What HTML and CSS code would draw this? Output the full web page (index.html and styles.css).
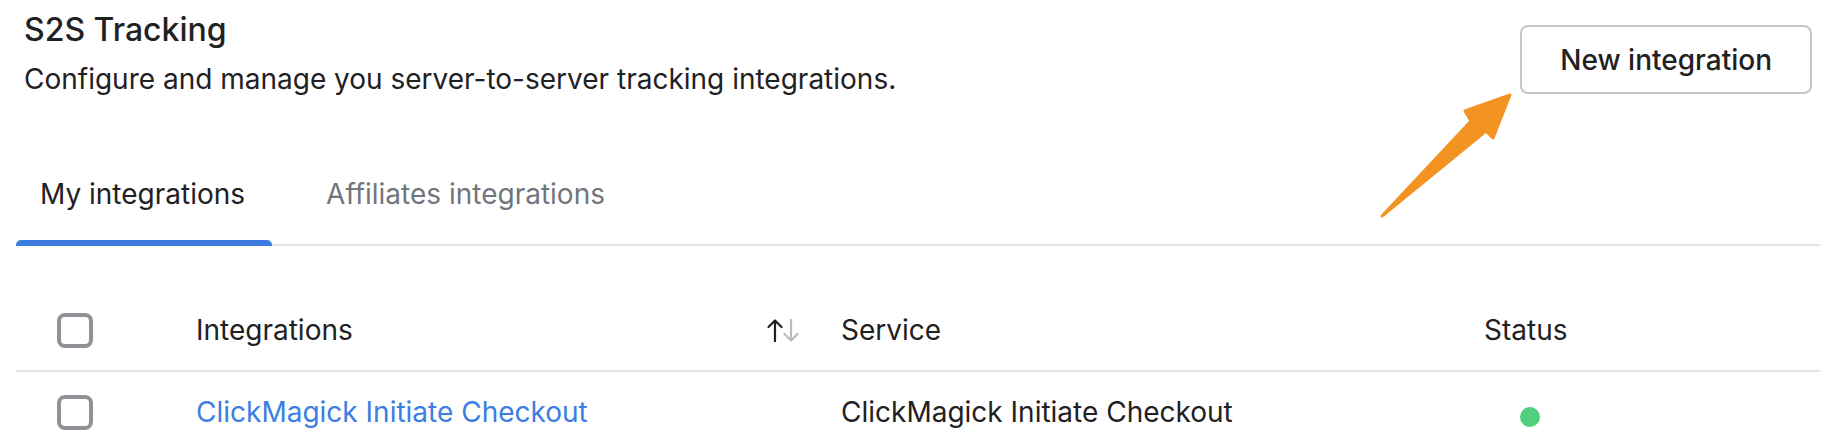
FILE: index.html
```html
<!DOCTYPE html>
<html lang="en">
<head>
<meta charset="utf-8">
<title>S2S Tracking</title>
<link rel="stylesheet" href="styles.css">
</head>
<body>
<div class="page">
  <header class="header">
    <div class="header-text">
      <h1 class="title">S2S Tracking</h1>
      <p class="subtitle">Configure and manage you server-to-server tracking integrations.</p>
    </div>
    <button class="btn">New integration</button>
  </header>

  <nav class="tabs">
    <div class="tab active">My integrations</div>
    <div class="tab">Affiliates integrations</div>
  </nav>

  <div class="table">
    <div class="row head">
      <div class="cell check"><span class="checkbox"></span></div>
      <div class="cell name">
        <span>Integrations</span>
        <svg class="sort" width="34" height="23" viewBox="0 0 34 23">
          <g fill="none" stroke-width="2.2" stroke-linecap="round" stroke-linejoin="round">
            <path d="M8 22V1.5M1.5 8L8 1.5L14.5 8" stroke="#1d1f21"/>
            <path d="M24 1V21.5M17.5 15L24 21.5L30.5 15" stroke="#b9bbbe"/>
          </g>
        </svg>
      </div>
      <div class="cell">Service</div>
      <div class="cell">Status</div>
    </div>
    <div class="row">
      <div class="cell check"><span class="checkbox"></span></div>
      <div class="cell name"><a class="link" href="#">ClickMagick Initiate Checkout</a></div>
      <div class="cell">ClickMagick Initiate Checkout</div>
      <div class="cell"><span class="dot"></span></div>
    </div>
  </div>

  <svg class="annot" width="1836" height="444" viewBox="0 0 1836 444">
    <path d="M1382 216L1471 121L1465 111L1510 95L1493 138L1486 131Z" fill="#f39422" stroke="#f39422" stroke-width="3" stroke-linejoin="round"/>
  </svg>
</div>
</body>
</html>
```

FILE: styles.css
```css
* { box-sizing: border-box; }
html, body { margin: 0; padding: 0; background: #ffffff; }
body {
  font-family: "Inter", "Noto Sans", "Liberation Sans", sans-serif;
  color: #1f2123;
}
.page {
  position: relative;
  width: 1836px;
  height: 444px;
  overflow: hidden;
  padding: 0 16px;
}
.header {
  display: flex;
  justify-content: space-between;
  align-items: flex-start;
  padding: 10px 8px 0;
}
.title {
  margin: 0;
  font-size: 32px;
  line-height: 40px;
  font-weight: 500;
}
.subtitle {
  margin: 9px 0 0;
  font-size: 28px;
  line-height: 40px;
  font-weight: 400;
}
.btn {
  margin-top: 15px;
  height: 69px;
  padding: 0 38px;
  border: 2px solid #c3c6ca;
  border-radius: 8px;
  background: #fff;
  font-family: inherit;
  font-size: 28px;
  line-height: 40px;
  font-weight: 500;
  color: #1f2123;
}
.tabs {
  display: flex;
  margin-top: 75px;
  border-bottom: 2px solid #e4e4e4;
}
.tab {
  position: relative;
  padding: 0 27px 30px 24px;
  font-size: 28px;
  line-height: 40px;
  color: #72767c;
  margin-right: 30px;
}
.tab.active { color: #1f2123; }
.tab.active::after {
  content: "";
  position: absolute;
  left: 0;
  right: 0;
  bottom: -2px;
  height: 6px;
  background: #3d7ddf;
  border-radius: 5px 5px 0 0;
}
.table { margin-top: 44px; }
.row {
  display: grid;
  grid-template-columns: 165px 645px 643px 1fr;
  height: 80px;
  align-items: center;
  font-size: 28px;
  line-height: 40px;
}
.row.head { border-bottom: 2px solid #e4e4e4; height: 82px; }
.cell {
  display: flex;
  align-items: center;
  padding-left: 15px;
  white-space: nowrap;
}
.cell.check { padding-left: 41px; }
.cell.name { justify-content: space-between; padding-right: 25px; }
.checkbox {
  display: block;
  width: 36px;
  height: 35px;
  border: 4px solid #8e9196;
  border-radius: 8px;
}
.sort { display: block; }
.link { color: #3c7ee2; text-decoration: none; }
.dot {
  display: block;
  width: 20px;
  height: 20px;
  border-radius: 50%;
  background: #52cf7e;
  margin-left: 36px;
  margin-top: 10px;
}
.annot {
  position: absolute;
  left: 0;
  top: 0;
  pointer-events: none;
}
```
